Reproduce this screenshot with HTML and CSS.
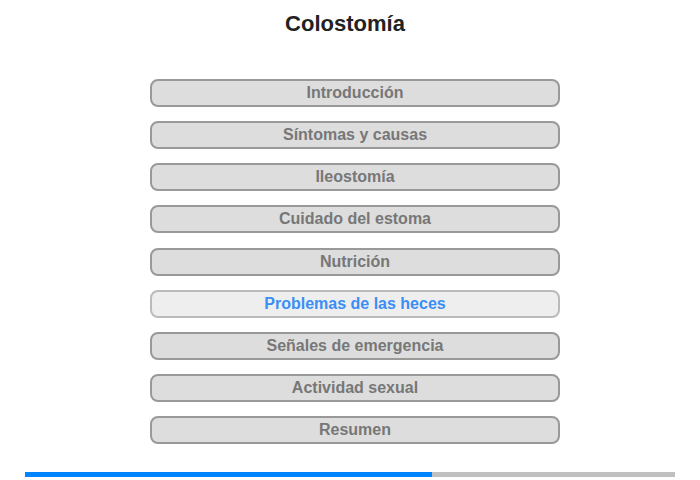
FILE: index.html
```html
<!DOCTYPE html>
<html lang="es">
<head>
    <meta charset="UTF-8">
    <meta name="viewport" content="width=device-width, initial-scale=1.0">
    <title>Colostomía</title>
    <link rel="stylesheet" href="styles.css">
</head>
<body>
    <div class="page">
        <h1 class="title">Colostomía</h1>
        <ul class="menu">
            <li><a class="item">Introducción</a></li>
            <li><a class="item">Síntomas y causas</a></li>
            <li><a class="item">Ileostomía</a></li>
            <li><a class="item">Cuidado del estoma</a></li>
            <li><a class="item">Nutrición</a></li>
            <li><a class="item active">Problemas de las heces</a></li>
            <li><a class="item">Señales de emergencia</a></li>
            <li><a class="item">Actividad sexual</a></li>
            <li><a class="item">Resumen</a></li>
        </ul>
        <div class="progress">
            <div class="bar" style="width: 62.6%"></div>
        </div>
    </div>
</body>
</html>
```

FILE: styles.css
```css
* {
    margin: 0;
    padding: 0;
    box-sizing: border-box;
}

body {
    background: #fff;
    font-family: "Liberation Sans", Arial, sans-serif;
}

ul {
    list-style: none;
}

.page {
    width: 700px;
    height: 480px;
}

.title {
    padding-top: 12px;
    padding-right: 10px;
    text-align: center;
    font-size: 22px;
    line-height: 24px;
    color: #222;
}

.menu {
    margin: 43px 0 0 150px;
    width: 410px;
    display: flex;
    flex-direction: column;
    gap: 14.13px;
}

.menu .item {
    display: block;
    height: 28px;
    border: 2px solid #999;
    border-radius: 8px;
    background: #ddd;
    text-align: center;
    font-size: 16px;
    font-weight: bold;
    line-height: 24px;
    color: #777;
    cursor: pointer;
}

.menu .item.active {
    background: #eee;
    border-color: #bbb;
    color: #3a8ef5;
}

.progress {
    margin: 28px 0 0 25px;
    width: 650px;
    height: 5px;
    background: #c0c0c0;
}

.progress .bar {
    height: 100%;
    background: #0084ff;
}
```
